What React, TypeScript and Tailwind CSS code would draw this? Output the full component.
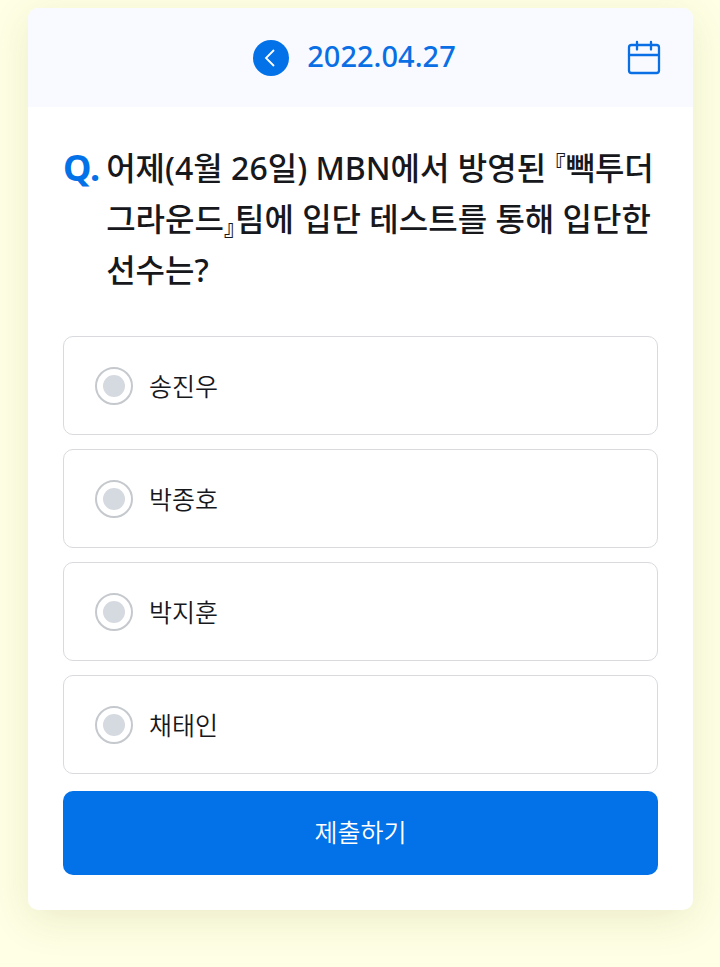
import { useState } from "react";

const QUIZ = {
  date: "2022.04.27",
  before: "어제(4월 26일) MBN에서 방영된 ",
  title: "빽투더그라운드",
  after: "팀에 입단 테스트를 통해 입단한 선수는?",
  options: ["송진우", "박종호", "박지훈", "채태인"],
};

const CalendarIcon = () => (
  <svg width="34" height="36" viewBox="0 0 34 36" fill="none" stroke="#0a6fe4" strokeWidth="2.3" aria-hidden>
    <rect x="2" y="5" width="30" height="28" rx="2.5" />
    <path d="M2 15h30M10 2v7.5M24 2v7.5" strokeLinecap="round" />
  </svg>
);

const QuizOption = ({
  label,
  checked,
  onSelect,
}: {
  label: string;
  checked: boolean;
  onSelect: () => void;
}) => (
  <label className="flex h-[99px] cursor-pointer items-center gap-4 rounded-[10px] border border-[#d8dadd] px-[31px] text-[25px] leading-9 font-[350] text-[#16181c]">
    <input
      type="radio"
      name="answer"
      value={label}
      checked={checked}
      onChange={onSelect}
      className="peer sr-only"
    />
    <span className="flex size-[38px] shrink-0 items-center justify-center rounded-full border-2 border-[#c5c9ce] text-[#d5d9e0] peer-checked:border-[#0371e8] peer-checked:text-[#0371e8]">
      <span className="size-[22px] rounded-full bg-current" />
    </span>
    {label}
  </label>
);

export default function App() {
  const [answer, setAnswer] = useState<string | null>(null);

  return (
    <div className="min-h-screen bg-[#ffffe5] pt-2 pr-[27px] pb-14 pl-7 font-['Noto_Sans','Noto_Sans_CJK_KR',sans-serif]">
      <main className="overflow-hidden rounded-[10px] bg-white shadow-[0_10px_40px_rgba(90,90,0,0.12)]">
        <header className="grid h-[99px] grid-cols-[1fr_auto_1fr] items-center bg-[#f8faff] pr-8 pl-5">
          <div className="col-start-2 flex items-center gap-[18px]">
            <button
              type="button"
              aria-label="이전 날짜"
              className="flex size-9 items-center justify-center rounded-full bg-[#0371e8]"
            >
              <svg width="36" height="36" viewBox="0 0 36 36" fill="none" stroke="#fff" strokeWidth="1.8" aria-hidden>
                <path d="M21 10l-8 8 8 8" />
              </svg>
            </button>
            <time dateTime="2022-04-27" className="pb-1 text-[29px] leading-9 font-medium text-[#0a6fe4]">
              {QUIZ.date}
            </time>
          </div>
          <button type="button" aria-label="달력" className="justify-self-end">
            <CalendarIcon />
          </button>
        </header>

        <form className="px-[35px] pt-[35px] pb-[35px]" onSubmit={(e) => e.preventDefault()}>
          <h1 className="flex gap-[6px] text-[32px] leading-[51px] font-medium text-[#16181c]">
            <span className="text-[36px] font-bold text-[#0371e8]">Q.</span>
            <span>
              {QUIZ.before}
              <span className="align-[8px] text-[22px] leading-none font-bold [font-feature-settings:'halt']">『</span>
              {QUIZ.title}
              <span className="align-[-4px] text-[22px] leading-none font-bold [font-feature-settings:'halt']">』</span>
              {QUIZ.after}
            </span>
          </h1>

          <div className="mt-[41px] flex flex-col gap-[14px]">
            {QUIZ.options.map((option) => (
              <QuizOption
                key={option}
                label={option}
                checked={answer === option}
                onSelect={() => setAnswer(option)}
              />
            ))}
          </div>

          <button
            type="submit"
            className="mt-[17px] h-[84px] w-full rounded-[10px] bg-[#0371e8] text-[25px] font-[350] text-white"
          >
            제출하기
          </button>
        </form>
      </main>
    </div>
  );
}
